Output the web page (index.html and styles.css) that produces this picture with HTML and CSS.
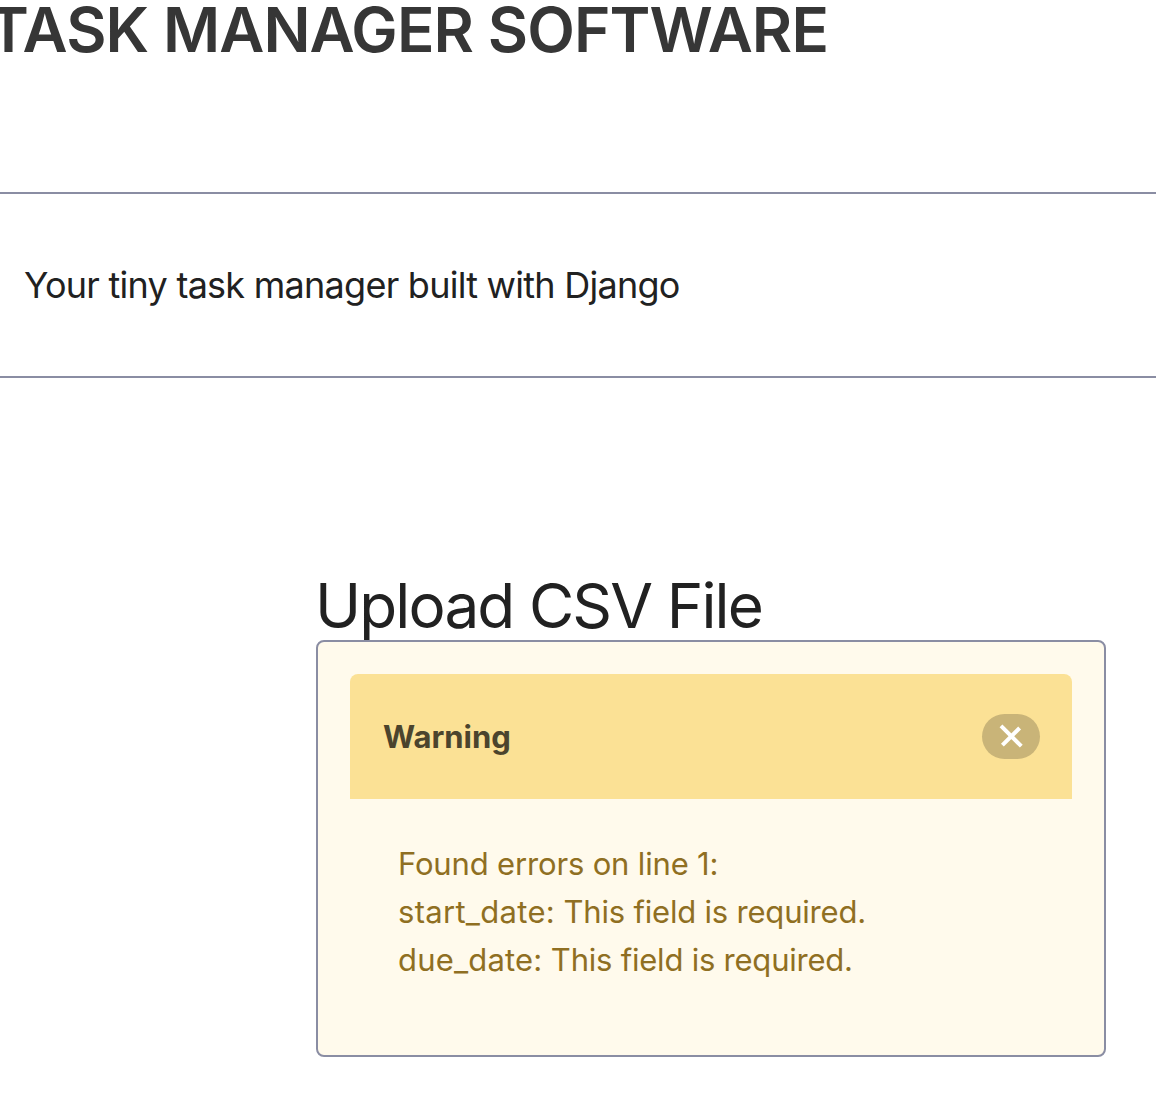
FILE: index.html
```html
<!DOCTYPE html>
<html lang="en">
<head>
<meta charset="utf-8">
<title>Task Manager</title>
<link rel="stylesheet" href="styles.css">
</head>
<body>
<header class="hero"><h1 class="hero-title">TASK MANAGER SOFTWARE</h1></header>
<section class="intro"><p class="intro-text">Your tiny task manager built with Django</p></section>
<main class="content">
<h2 class="content-title">Upload CSV File</h2>
<div class="box">
<article class="message">
<div class="message-header">
<p class="message-title">Warning</p>
<button class="delete" aria-label="delete"><svg width="24" height="24" viewBox="0 0 24 24"><path d="M2 1.8L22.3 22.1M20.6 4L3.4 21.2" stroke="#fff" stroke-width="4"/></svg></button>
</div>
<div class="message-body">
<p class="error-heading">Found errors on line 1:</p>
<p class="error-start"><span class="field-name">start_date:</span> This field is required.</p>
<p class="error-due"><span class="field-name">due_date:</span> This field is required.</p>
</div>
</article>
</div>
</main>
</body>
</html>
```
FILE: styles.css
```css
* { box-sizing: border-box; margin: 0; padding: 0; }
body { background: #fff; color: #212121; font-family: Inter, sans-serif; overflow: hidden; height: 1094px; }
.hero { height: 192px; }
.hero-title { font-size: 62px; line-height: 60px; font-weight: 600; color: #363636; margin-left: -12px; letter-spacing: -0.91px; white-space: nowrap; }
.intro { height: 186px; border-top: 2px solid #8a8da3; border-bottom: 2px solid #8a8da3; padding: 67px 24px; }
.intro-text { font-size: 36px; line-height: 48px; letter-spacing: -0.74px; white-space: nowrap; }
.content { padding: 196px 50px 0 316px; }
.content-title { height: 66px; font-size: 62px; line-height: 64px; font-weight: 400; margin-left: -1px; letter-spacing: -1.88px; white-space: nowrap; }
.box { position: relative; height: 417px; border: 2px solid #8a8da3; border-radius: 8px; background: #fffaec; padding: 32px; }
.message-header { height: 125px; background: #fbe195; border-radius: 8px 8px 0 0; padding: 0 32px 0 33px; display: flex; align-items: center; justify-content: space-between; }
.message-title { font-size: 31px; line-height: 48px; font-weight: 700; color: #4b442d; }
.delete { width: 58px; height: 45px; border: 0; border-radius: 23px; background: #c9b478; display: flex; align-items: center; justify-content: center; padding-bottom: 2px; }
.message-body { padding: 41px 48px; color: #8f6f22; font-size: 31px; line-height: 48px; white-space: nowrap; }
.error-heading { letter-spacing: -0.16px; }
.error-start { letter-spacing: -0.2px; }
.error-due { letter-spacing: -0.22px; }
.error-start .field-name { letter-spacing: 0.3px; }
.error-due .field-name { letter-spacing: 0.18px; }
```
